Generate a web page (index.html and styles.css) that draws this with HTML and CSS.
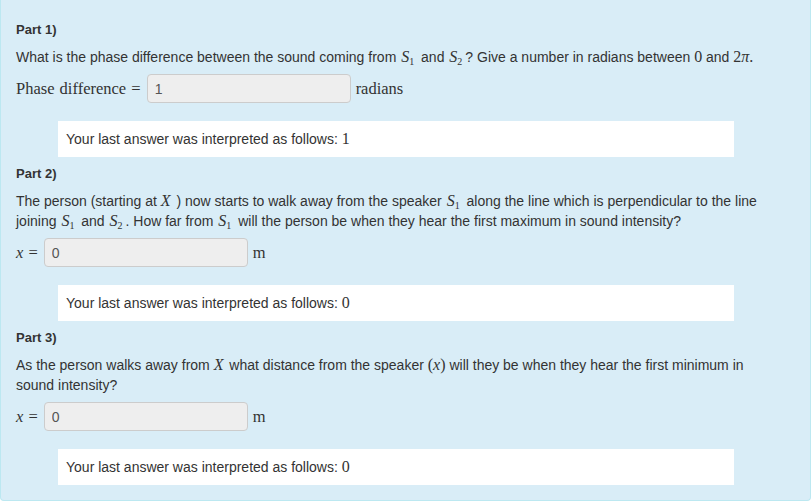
FILE: index.html
```html
<!DOCTYPE html>
<html>
<head>
<meta charset="utf-8">
<link rel="stylesheet" href="styles.css">
</head>
<body>
<div class="panel">
  <section class="part">
    <h4 class="part-title">Part 1)</h4>
    <p class="question">What is the phase difference between the sound coming from <span class="m"><i>S</i><sub>1</sub></span> and <span class="m"><i>S</i><sub>2</sub></span>? Give a number in radians between <span class="mn">0</span> and <span class="mn">2<i>π</i>.</span></p>
    <div class="answer-row">
      <span class="label">Phase difference =</span>
      <input class="ans" type="text" value="1" disabled>
      <span class="unit">radians</span>
    </div>
    <div class="feedback">Your last answer was interpreted as follows: <span class="mn">1</span></div>
  </section>
  <section class="part">
    <h4 class="part-title">Part 2)</h4>
    <p class="question">The person (starting at <span class="mv"><i>X</i></span> ) now starts to walk away from the speaker <span class="m"><i>S</i><sub>1</sub></span> along the line which is perpendicular to the line joining <span class="m"><i>S</i><sub>1</sub></span> and <span class="m"><i>S</i><sub>2</sub></span>. How far from <span class="m"><i>S</i><sub>1</sub></span> will the person be when they hear the first maximum in sound intensity?</p>
    <div class="answer-row">
      <span class="label"><i>x</i> =</span>
      <input class="ans" type="text" value="0" disabled>
      <span class="unit">m</span>
    </div>
    <div class="feedback">Your last answer was interpreted as follows: <span class="mn">0</span></div>
  </section>
  <section class="part">
    <h4 class="part-title">Part 3)</h4>
    <p class="question">As the person walks away from <span class="mv"><i>X</i></span> what distance from the speaker <span class="mn">(<i>x</i>)</span> will they be when they hear the first minimum in sound intensity?</p>
    <div class="answer-row">
      <span class="label"><i>x</i> =</span>
      <input class="ans" type="text" value="0" disabled>
      <span class="unit">m</span>
    </div>
    <div class="feedback">Your last answer was interpreted as follows: <span class="mn">0</span></div>
  </section>
</div>
</body>
</html>
```

FILE: styles.css
```css
html, body {
  margin: 0;
  padding: 0;
  background: #fff;
}
body {
  font-family: "Liberation Sans", Arial, sans-serif;
  font-size: 14px;
  color: #333;
}
.panel {
  width: 809px;
  height: 480px;
  background: #d9edf7;
  border: 1px solid #bce8f1;
  border-top: 0;
  border-radius: 0 0 4px 4px;
  padding: 20px 0 0 0;
}
.part {
  padding: 0 26px 0 15px;
}
.part-title {
  margin: 0;
  font-size: 13px;
  font-weight: bold;
  line-height: 20px;
}
.question {
  margin: 7px 0 7px 0;
  line-height: 20px;
}
.m, .mv, .mn {
  font-family: "Liberation Serif", "Times New Roman", serif;
  font-size: 16px;
}
.m {
  margin: 0 3px 0 1px;
}
.m sub {
  font-size: 10px;
  vertical-align: -3px;
  line-height: 0;
}
.mv {
  margin-right: 2px;
}
.answer-row {
  display: flex;
  align-items: center;
  height: 29px;
  font-family: "Liberation Serif", "Times New Roman", serif;
  font-size: 16.5px;
}
.label {
  margin-right: 6px;
  word-spacing: 1px;
}
.ans {
  box-sizing: border-box;
  width: 204px;
  height: 29px;
  margin: 0 5px 0 0;
  padding: 0 7px;
  border: 1px solid #ccc;
  border-radius: 4px;
  background: #eee;
  font-family: "Liberation Sans", Arial, sans-serif;
  font-size: 14px;
  color: #555;
}
.unit {
  font-size: 16.5px;
}
.feedback {
  box-sizing: border-box;
  width: 676px;
  height: 36px;
  margin: 18px 0 7px 42px;
  padding: 0 8px;
  background: #fff;
  display: flex;
  align-items: center;
  white-space: pre;
}
```
